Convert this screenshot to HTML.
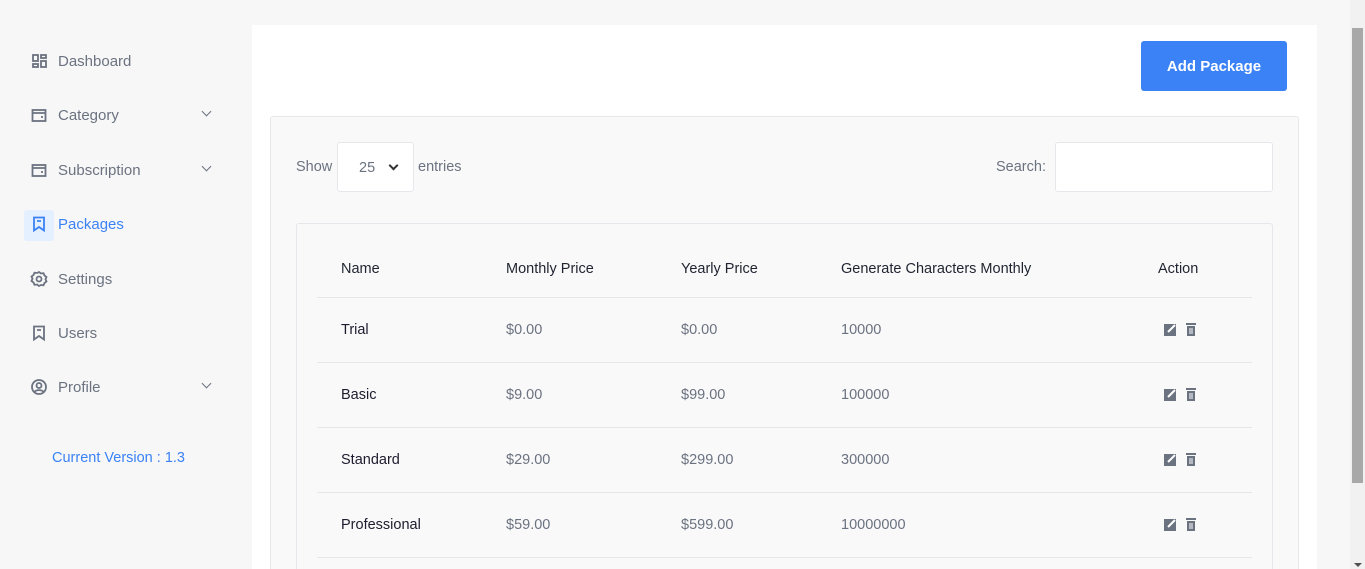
<!DOCTYPE html>
<html style="overflow:hidden;height:569px"><head><style>
*{box-sizing:border-box;margin:0;padding:0}
body{width:1365px;height:569px;overflow:hidden;background:#f7f7f7;font-family:"Liberation Sans",sans-serif;position:relative;color:#6b7280}
.side a{position:absolute;left:30px;display:flex;align-items:center;font-size:15px;color:#6b7280;height:20px}
.side svg{width:18px;height:18px;margin-right:10px;stroke:#6b7280;fill:none;stroke-width:1.8}
.chev{position:absolute;left:203px;width:7px;height:7px;border-right:1.5px solid #6b7280;border-bottom:1.5px solid #6b7280;transform:rotate(45deg)}
.main{position:absolute;left:252px;top:25px;width:1065px;height:544px;background:#fff}
.btn{position:absolute;left:1141px;top:41px;width:146px;height:50px;background:#3b82f6;border-radius:3px;color:#fff;font-size:15px;font-weight:bold;display:flex;align-items:center;justify-content:center}
.card{position:absolute;left:270px;top:116px;width:1029px;height:453px;background:#f9f9f9;border:1px solid #e5e7eb;border-bottom:none;border-radius:3px 3px 0 0}
.tbl{position:absolute;left:296px;top:223px;width:977px;height:346px;border:1px solid #e5e7eb;border-bottom:none;border-radius:3px 3px 0 0;background:#f9f9f9}
.row{position:absolute;left:317px;width:935px;border-bottom:1px solid #e5e7eb;height:65px}
.c{position:absolute;font-size:14.5px;top:50%;transform:translateY(-50%)}
.h .c{color:#1f2430}
.nm{color:#1f1b2e}
.sb{position:absolute;left:1350px;top:0;width:15px;height:569px;background:#f1f1f1}
.th{position:absolute;left:1352px;top:28px;width:11px;height:455px;background:#a8a8a8}
</style></head><body>
<div class="side">
<a style="top:51px"><svg viewBox="0 0 18 18"><rect x="3" y="3" width="5" height="6"/><rect x="3" y="12" width="5" height="3"/><rect x="11" y="3" width="5" height="3"/><rect x="11" y="9" width="5" height="6"/></svg>Dashboard</a>
<a style="top:105px"><svg viewBox="0 0 18 18"><rect x="2.5" y="4" width="13" height="11"/><path d="M2.5 7h13M11 11h2"/></svg>Category</a><span class="chev" style="top:108px"></span>
<a style="top:160px"><svg viewBox="0 0 18 18"><rect x="2.5" y="4" width="13" height="11"/><path d="M2.5 7h13M11 11h2"/></svg>Subscription</a><span class="chev" style="top:163px"></span>
<div style="position:absolute;left:24px;top:210px;width:30px;height:31px;background:#e4efff;border-radius:3px"></div>
<a style="top:214px;color:#3b82f6"><svg viewBox="0 0 18 18" style="stroke:#3b82f6"><path d="M4 2.5h10v13l-5-3.5-5 3.5z M7 6h4"/></svg>Packages</a>
<a style="top:269px"><svg viewBox="0 0 18 18"><path d="M9 2l2 1.5 2.5-.3 1 2.3 2 1.5-1 2.3 1 2.2-2 1.5-1 2.3-2.5-.3L9 16l-2-1.5-2.5.3-1-2.3-2-1.5 1-2.2-1-2.3 2-1.5 1-2.3 2.5.3z"/><circle cx="9" cy="9" r="2.5"/></svg>Settings</a>
<a style="top:323px"><svg viewBox="0 0 18 18"><path d="M4 2.5h10v13l-5-3.5-5 3.5z M7 6h4"/></svg>Users</a>
<a style="top:377px"><svg viewBox="0 0 18 18"><circle cx="9" cy="9" r="7"/><circle cx="9" cy="7.5" r="2.5"/><path d="M4.5 14c1.5-2.5 7.5-2.5 9 0"/></svg>Profile</a><span class="chev" style="top:380px"></span>
<div style="position:absolute;left:52px;top:450px;font-size:14.5px;color:#3b82f6">Current Version : 1.3</div>
</div>
<div class="main"></div>
<div class="btn">Add Package</div>
<div class="card"></div>
<div style="position:absolute;left:296px;top:159px;font-size:14.5px">Show</div>
<div style="position:absolute;left:337px;top:142px;width:77px;height:50px;background:#fff;border:1px solid #e5e7eb;border-radius:3px;font-size:14.5px;padding:17px 0 0 21px">25<span style="position:absolute;left:52px;top:19px;width:7px;height:7px;border-right:2px solid #333;border-bottom:2px solid #333;transform:rotate(45deg)"></span></div>
<div style="position:absolute;left:418px;top:159px;font-size:14.5px">entries</div>
<div style="position:absolute;left:996px;top:159px;font-size:14.5px">Search:</div>
<div style="position:absolute;left:1055px;top:142px;width:218px;height:50px;background:#fff;border:1px solid #e5e7eb;border-radius:3px"></div>
<div class="tbl"></div>
<div class="row h" style="top:238px;height:60px"><span class="c" style="left:24px;top:53%">Name</span><span class="c" style="left:189px;top:53%">Monthly Price</span><span class="c" style="left:364px;top:53%">Yearly Price</span><span class="c" style="left:524px;top:53%">Generate Characters Monthly</span><span class="c" style="left:841px;top:53%">Action</span></div>
<div class="row" style="top:298px"><span class="c nm" style="left:24px">Trial</span><span class="c" style="left:189px">$0.00</span><span class="c" style="left:364px">$0.00</span><span class="c" style="left:524px">10000</span><span class="c" style="left:846px;top:52%"><svg width="40" height="16"><rect x="1" y="3" width="12" height="12" fill="#6b7280"/><path d="M5 11l7-7" stroke="#fff" stroke-width="2"/><rect x="23" y="2" width="10" height="2" fill="#6b7280"/><rect x="24" y="5" width="8" height="10" fill="#6b7280"/><path d="M27 7v6M29 7v6" stroke="#fff"/></svg></span></div>
<div class="row" style="top:363px"><span class="c nm" style="left:24px">Basic</span><span class="c" style="left:189px">$9.00</span><span class="c" style="left:364px">$99.00</span><span class="c" style="left:524px">100000</span><span class="c" style="left:846px;top:52%"><svg width="40" height="16"><rect x="1" y="3" width="12" height="12" fill="#6b7280"/><path d="M5 11l7-7" stroke="#fff" stroke-width="2"/><rect x="23" y="2" width="10" height="2" fill="#6b7280"/><rect x="24" y="5" width="8" height="10" fill="#6b7280"/><path d="M27 7v6M29 7v6" stroke="#fff"/></svg></span></div>
<div class="row" style="top:428px"><span class="c nm" style="left:24px">Standard</span><span class="c" style="left:189px">$29.00</span><span class="c" style="left:364px">$299.00</span><span class="c" style="left:524px">300000</span><span class="c" style="left:846px;top:52%"><svg width="40" height="16"><rect x="1" y="3" width="12" height="12" fill="#6b7280"/><path d="M5 11l7-7" stroke="#fff" stroke-width="2"/><rect x="23" y="2" width="10" height="2" fill="#6b7280"/><rect x="24" y="5" width="8" height="10" fill="#6b7280"/><path d="M27 7v6M29 7v6" stroke="#fff"/></svg></span></div>
<div class="row" style="top:493px"><span class="c nm" style="left:24px">Professional</span><span class="c" style="left:189px">$59.00</span><span class="c" style="left:364px">$599.00</span><span class="c" style="left:524px">10000000</span><span class="c" style="left:846px;top:52%"><svg width="40" height="16"><rect x="1" y="3" width="12" height="12" fill="#6b7280"/><path d="M5 11l7-7" stroke="#fff" stroke-width="2"/><rect x="23" y="2" width="10" height="2" fill="#6b7280"/><rect x="24" y="5" width="8" height="10" fill="#6b7280"/><path d="M27 7v6M29 7v6" stroke="#fff"/></svg></span></div>
<div class="sb"></div><div class="th"></div>
<div style="position:absolute;left:1354px;top:563px;border-left:4px solid transparent;border-right:4px solid transparent;border-top:4px solid #505050"></div>
</body></html>
